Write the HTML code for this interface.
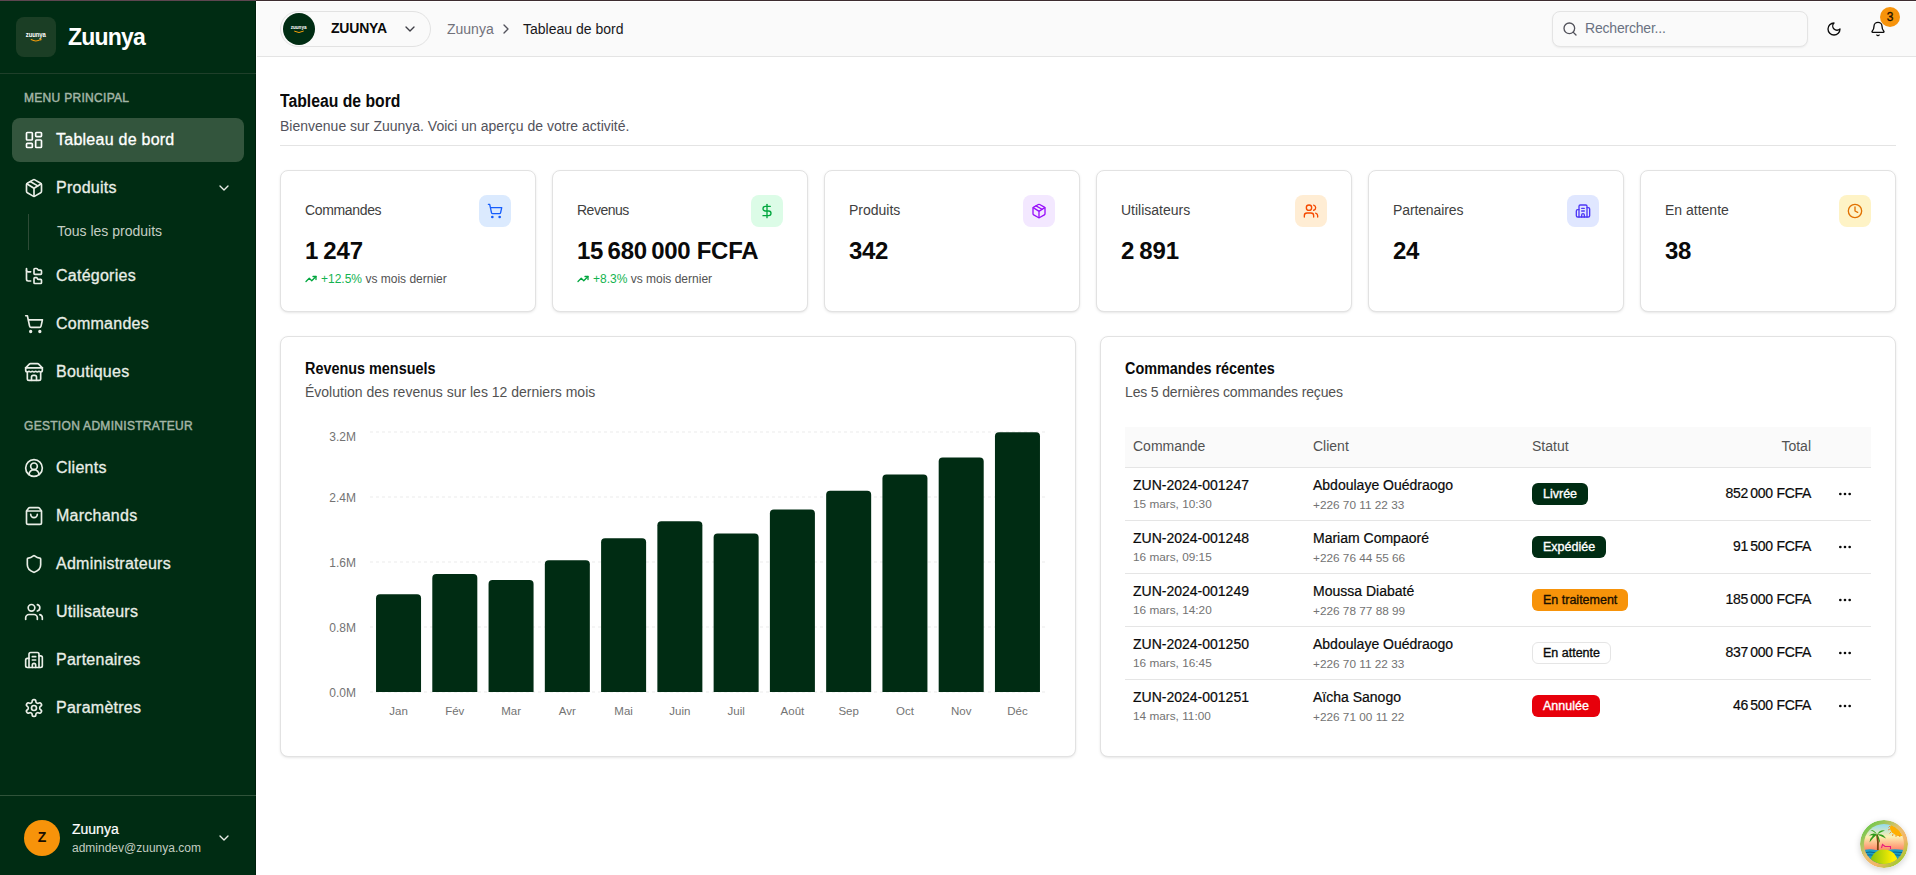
<!DOCTYPE html>
<html lang="fr">
<head>
<meta charset="utf-8">
<title>Zuunya - Tableau de bord</title>
<style>
*{box-sizing:border-box;margin:0;padding:0}
html,body{width:1916px;height:875px;overflow:hidden;background:#fff}
body{font-family:"Liberation Sans",sans-serif;color:#0a0a0a;position:relative}
.abs{position:absolute}
svg{display:block}
/* top artifact line */
#topline{left:0;top:0;width:1916px;height:1px;background:#3d2c30}
#topline:before{content:"";position:absolute;left:0;top:0;width:256px;height:1px;background:#5d4650}
/* sidebar */
#sb{left:0;top:1px;width:256px;height:874px;background:#002c13;border-right:1px solid #00200d;color:#e9eee7}
#sb .sep{position:absolute;left:0;width:256px;height:1px;background:#1f3f2a}
#logo{left:16px;top:16px;width:40px;height:40px;border-radius:8px;background:#1b3e25}
#brand{left:68px;top:23px;font-size:23px;font-weight:700;color:#fff;letter-spacing:-0.8px}
.grp{position:absolute;left:24px;font-size:12px;font-weight:400;-webkit-text-stroke:0.45px currentColor;color:#a3b5a6;letter-spacing:0.3px}
.nav{position:absolute;left:12px;width:232px;height:44px;border-radius:8px}
.nav.active{background:#33553d;color:#fff}
.nav svg{position:absolute;left:12px;top:12px}
.nav span{position:absolute;left:44px;top:13px;font-size:16px;white-space:nowrap;-webkit-text-stroke:0.3px currentColor;letter-spacing:0.25px}
.nav .chev{position:absolute;left:204px;top:14px;left:auto;right:12px}
.subline{position:absolute;left:28px;width:1px;height:36px;background:#2d4b36}
.sub{position:absolute;left:57px;font-size:14px;margin-top:1px;color:#c5cec3;white-space:nowrap}
#av{left:24px;top:819px;width:36px;height:36px;border-radius:50%;background:#f7930a;color:#1a0f00;font-size:14px;font-weight:700;text-align:center;line-height:35px}
#uname{left:72px;top:820px;font-size:14px;color:#fff;-webkit-text-stroke:0.2px currentColor}
#umail{left:72px;top:840px;font-size:12px;color:#c3cdc1}
/* main */
#hdr{left:257px;top:2px;width:1659px;height:55px;background:#fafafa;border-bottom:1px solid #e4e4e4}
#pill{left:23px;top:9px;width:151px;height:36px;border:1px solid #e2e2e2;border-radius:18px}
#pav{left:2px;top:1px;width:32px;height:32px;border-radius:50%;background:#002c13}
#pname{left:50px;top:8px;font-size:14px;font-weight:700;color:#0a0a0a;letter-spacing:-0.2px}
#bc1{left:190px;top:19px;font-size:14px;color:#71717a}
#bc2{left:266px;top:19px;font-size:14px;color:#18181b}
#search{left:1295px;top:9px;width:256px;height:36px;border:1px solid #e4e4e4;border-radius:8px;background:#fafafa;box-shadow:0 1px 2px rgba(0,0,0,.06)}
#sph{left:32px;top:8px;font-size:14px;color:#6a7282;letter-spacing:-0.2px}
#badge{left:1623px;top:5px;width:20px;height:20px;border-radius:50%;background:#f7930a;color:#1a0f00;font-size:12px;font-weight:400;-webkit-text-stroke:0.3px currentColor;text-align:center;line-height:20px}
#main{left:256px;top:57px;width:1660px;height:818px}
#ptitle{left:24px;top:33.5px;font-size:17.5px;font-weight:700;color:#0a0a0a;transform:scaleX(0.9);transform-origin:0 0}
#psub{left:24px;top:61px;font-size:14px;color:#52525b}
#phr{left:24px;top:88px;width:1616px;height:1px;background:#e4e4e4}
.card{position:absolute;background:#fff;border:1px solid #e2e2e2;border-radius:8px;box-shadow:0 1px 3px 0 rgba(0,0,0,.08),0 1px 2px -1px rgba(0,0,0,.08)}
.stat{width:256px;height:142px}
.slab{position:absolute;left:24px;top:31px;font-size:14px;color:#404040;white-space:nowrap}
.sico{position:absolute;left:198px;top:24px;width:32px;height:32px;border-radius:8px}
.sico svg{position:absolute;left:8px;top:8px}
.sval{position:absolute;left:24px;top:66px;font-size:24px;font-weight:700;color:#0a0a0a;white-space:nowrap;letter-spacing:-0.3px}
.strend{position:absolute;left:24px;top:101px;font-size:12px;color:#525252;white-space:nowrap;padding-left:16px}
.strend svg{position:absolute;left:0;top:1px}
.strend .g{color:#13b350}
.ctitle{position:absolute;left:24px;top:23px;font-size:16px;font-weight:700;color:#0a0a0a;white-space:nowrap;transform:scaleX(0.9);transform-origin:0 0}
.csub{position:absolute;left:24px;top:47px;font-size:14px;color:#525252;white-space:nowrap}
#tbl{position:absolute;left:24px;top:90px;width:746px;height:305px}
.th{position:absolute;left:0;top:0;width:746px;height:41px;background:#fafafa;border-bottom:1px solid #e5e5e5}
.th span{position:absolute;top:10.5px;font-size:14px;color:#525252}
.tr{position:absolute;left:0;width:746px;height:53px}
.tr.bb{border-bottom:1px solid #e5e5e5}
.oid{position:absolute;left:8px;top:9px;font-size:14px;color:#0a0a0a;-webkit-text-stroke:0.2px currentColor}
.odt{position:absolute;left:8px;top:29px;font-size:11.8px;color:#737373}
.cln{position:absolute;left:188px;top:9px;font-size:14px;color:#0a0a0a;-webkit-text-stroke:0.2px currentColor}
.clp{position:absolute;left:188px;top:29.5px;font-size:11.8px;color:#737373}
.bdg{position:absolute;left:407px;top:15px;height:22px;padding:0 11px;border-radius:6px;font-size:12.5px;font-weight:400;-webkit-text-stroke:0.35px currentColor;line-height:22px;white-space:nowrap}
.b-green{background:#002c13;color:#fff}
.b-orange{background:#f7930a;color:#1a0f00}
.b-outline{background:#fff;color:#0a0a0a;border:1px solid #e5e5e5;line-height:20px;padding:0 10px}
.b-red{background:#e7000b;color:#fff}
.tot{position:absolute;right:60px;top:16.5px;font-size:14px;letter-spacing:-0.3px;color:#0a0a0a;-webkit-text-stroke:0.2px currentColor;white-space:nowrap}
.dots{position:absolute;left:712px;top:18px}
#beach{left:1860px;top:820px;width:48px;height:48px;border-radius:50%;box-shadow:0 2px 6px rgba(0,0,0,.18)}
#beach svg{border-radius:50%}
</style>
</head>
<body>
<div id="topline" class="abs"></div>
<div id="sb" class="abs">
  <div id="logo" class="abs"><svg width="40" height="40" viewBox="0 0 40 40"><text x="19.8" y="20.1" text-anchor="middle" font-family="Liberation Sans" font-weight="700" font-size="6.3" fill="#fff" letter-spacing="-0.1" transform="translate(19.8 0) scale(0.95 1) translate(-19.8 0)">zuunya</text><path d="M15.2 22.6 Q20 25.4 24.8 22.4" stroke="#f59e0b" stroke-width="1.1" fill="none" stroke-linecap="round"/><path d="M23.6 21.9 L25.1 22.2 L24.7 23.6" stroke="#f59e0b" stroke-width="0.8" fill="none"/></svg></div>
  <div id="brand" class="abs">Zuunya</div>
  <div class="sep" style="top:72px"></div>
  <div class="grp" style="top:90px">MENU PRINCIPAL</div>
  <div class="nav active" style="top:117px"><svg width="20" height="20" viewBox="0 0 24 24" fill="none" stroke="currentColor" stroke-width="2" stroke-linecap="round" stroke-linejoin="round"><rect width="7" height="9" x="3" y="3" rx="1"/><rect width="7" height="5" x="14" y="3" rx="1"/><rect width="7" height="9" x="14" y="12" rx="1"/><rect width="7" height="5" x="3" y="16" rx="1"/></svg><span>Tableau de bord</span></div>
  <div class="nav" style="top:165px"><svg width="20" height="20" viewBox="0 0 24 24" fill="none" stroke="currentColor" stroke-width="2" stroke-linecap="round" stroke-linejoin="round"><path d="M11 21.73a2 2 0 0 0 2 0l7-4A2 2 0 0 0 21 16V8a2 2 0 0 0-1-1.73l-7-4a2 2 0 0 0-2 0l-7 4A2 2 0 0 0 3 8v8a2 2 0 0 0 1 1.73z"/><path d="M12 22V12"/><path d="m3.3 7 7.703 4.734a2 2 0 0 0 1.994 0L20.7 7"/><path d="m7.5 4.27 9 5.15"/></svg><span>Produits</span><svg class="chev" width="16" height="16" viewBox="0 0 24 24" fill="none" stroke="currentColor" stroke-width="2" stroke-linecap="round" stroke-linejoin="round"><path d="m6 9 6 6 6-6"/></svg></div>
  <div class="subline" style="top:213px"></div>
  <div class="sub" style="top:221px">Tous les produits</div>
  <div class="nav" style="top:253px"><svg width="20" height="20" viewBox="0 0 24 24" fill="none" stroke="currentColor" stroke-width="2" stroke-linecap="round" stroke-linejoin="round"><path d="M20 10a1 1 0 0 0 1-1V6a1 1 0 0 0-1-1h-2.5a1 1 0 0 1-.8-.4l-.9-1.2A1 1 0 0 0 15 3h-2a1 1 0 0 0-1 1v5a1 1 0 0 0 1 1Z"/><path d="M20 21a1 1 0 0 0 1-1v-3a1 1 0 0 0-1-1h-2.9a1 1 0 0 1-.88-.55l-.42-.85a1 1 0 0 0-.92-.6H13a1 1 0 0 0-1 1v5a1 1 0 0 0 1 1Z"/><path d="M3 5a2 2 0 0 0 2 2h3"/><path d="M3 3v13a2 2 0 0 0 2 2h3"/></svg><span>Catégories</span></div>
  <div class="nav" style="top:301px"><svg width="20" height="20" viewBox="0 0 24 24" fill="none" stroke="currentColor" stroke-width="2" stroke-linecap="round" stroke-linejoin="round"><circle cx="8" cy="21" r="1"/><circle cx="19" cy="21" r="1"/><path d="M2.05 2.05h2l2.66 12.42a2 2 0 0 0 2 1.58h9.78a2 2 0 0 0 1.95-1.57l1.65-7.43H5.12"/></svg><span>Commandes</span></div>
  <div class="nav" style="top:349px"><svg width="20" height="20" viewBox="0 0 24 24" fill="none" stroke="currentColor" stroke-width="2" stroke-linecap="round" stroke-linejoin="round"><path d="m2 7 4.41-4.41A2 2 0 0 1 7.83 2h8.34a2 2 0 0 1 1.42.59L22 7"/><path d="M4 12v8a2 2 0 0 0 2 2h12a2 2 0 0 0 2-2v-8"/><path d="M15 22v-4a2 2 0 0 0-2-2h-2a2 2 0 0 0-2 2v4"/><path d="M2 7h20"/><path d="M22 7v3a2 2 0 0 1-2 2a2.7 2.7 0 0 1-1.59-.63.7.7 0 0 0-.82 0A2.7 2.7 0 0 1 16 12a2.7 2.7 0 0 1-1.59-.63.7.7 0 0 0-.82 0A2.7 2.7 0 0 1 12 12a2.7 2.7 0 0 1-1.59-.63.7.7 0 0 0-.82 0A2.7 2.7 0 0 1 8 12a2.7 2.7 0 0 1-1.59-.63.7.7 0 0 0-.82 0A2.7 2.7 0 0 1 4 12a2 2 0 0 1-2-2V7"/></svg><span>Boutiques</span></div>
  <div class="grp" style="top:418px">GESTION ADMINISTRATEUR</div>
  <div class="nav" style="top:445px"><svg width="20" height="20" viewBox="0 0 24 24" fill="none" stroke="currentColor" stroke-width="2" stroke-linecap="round" stroke-linejoin="round"><path d="M18 20a6 6 0 0 0-12 0"/><circle cx="12" cy="10" r="4"/><circle cx="12" cy="12" r="10"/></svg><span>Clients</span></div>
  <div class="nav" style="top:493px"><svg width="20" height="20" viewBox="0 0 24 24" fill="none" stroke="currentColor" stroke-width="2" stroke-linecap="round" stroke-linejoin="round"><path d="M16 10a4 4 0 0 1-8 0"/><path d="M3.103 6.034h17.794"/><path d="M3.4 5.467a2 2 0 0 0-.4 1.2V20a2 2 0 0 0 2 2h14a2 2 0 0 0 2-2V6.667a2 2 0 0 0-.4-1.2l-2-2.667A2 2 0 0 0 17 2H7a2 2 0 0 0-1.6.8z"/></svg><span>Marchands</span></div>
  <div class="nav" style="top:541px"><svg width="20" height="20" viewBox="0 0 24 24" fill="none" stroke="currentColor" stroke-width="2" stroke-linecap="round" stroke-linejoin="round"><path d="M20 13c0 5-3.5 7.5-7.66 8.95a1 1 0 0 1-.67-.01C7.5 20.5 4 18 4 13V6a1 1 0 0 1 1-1c2 0 4.5-1.2 6.24-2.72a1.17 1.17 0 0 1 1.52 0C14.51 3.81 17 5 19 5a1 1 0 0 1 1 1z"/></svg><span>Administrateurs</span></div>
  <div class="nav" style="top:589px"><svg width="20" height="20" viewBox="0 0 24 24" fill="none" stroke="currentColor" stroke-width="2" stroke-linecap="round" stroke-linejoin="round"><path d="M16 21v-2a4 4 0 0 0-4-4H6a4 4 0 0 0-4 4v2"/><circle cx="9" cy="7" r="4"/><path d="M22 21v-2a4 4 0 0 0-3-3.87"/><path d="M16 3.13a4 4 0 0 1 0 7.75"/></svg><span>Utilisateurs</span></div>
  <div class="nav" style="top:637px"><svg width="20" height="20" viewBox="0 0 24 24" fill="none" stroke="currentColor" stroke-width="2" stroke-linecap="round" stroke-linejoin="round"><path d="M10 12h4"/><path d="M10 8h4"/><path d="M14 21v-3a2 2 0 0 0-4 0v3"/><path d="M6 10H4a2 2 0 0 0-2 2v7a2 2 0 0 0 2 2h16a2 2 0 0 0 2-2V9a2 2 0 0 0-2-2h-2"/><path d="M6 21V5a2 2 0 0 1 2-2h8a2 2 0 0 1 2 2v16"/></svg><span>Partenaires</span></div>
  <div class="nav" style="top:685px"><svg width="20" height="20" viewBox="0 0 24 24" fill="none" stroke="currentColor" stroke-width="2" stroke-linecap="round" stroke-linejoin="round"><path d="M12.22 2h-.44a2 2 0 0 0-2 2v.18a2 2 0 0 1-1 1.73l-.43.25a2 2 0 0 1-2 0l-.15-.08a2 2 0 0 0-2.73.73l-.22.38a2 2 0 0 0 .73 2.73l.15.1a2 2 0 0 1 1 1.72v.51a2 2 0 0 1-1 1.74l-.15.09a2 2 0 0 0-.73 2.73l.22.38a2 2 0 0 0 2.73.73l.15-.08a2 2 0 0 1 2 0l.43.25a2 2 0 0 1 1 1.73V20a2 2 0 0 0 2 2h.44a2 2 0 0 0 2-2v-.18a2 2 0 0 1 1-1.73l.43-.25a2 2 0 0 1 2 0l.15.08a2 2 0 0 0 2.73-.73l.22-.39a2 2 0 0 0-.73-2.73l-.15-.08a2 2 0 0 1-1-1.74v-.5a2 2 0 0 1 1-1.74l.15-.09a2 2 0 0 0 .73-2.73l-.22-.38a2 2 0 0 0-2.73-.73l-.15.08a2 2 0 0 1-2 0l-.43-.25a2 2 0 0 1-1-1.73V4a2 2 0 0 0-2-2z"/><circle cx="12" cy="12" r="3"/></svg><span>Paramètres</span></div>
  <div class="sep" style="top:794px;background:#30533a"></div>
  <div id="av" class="abs">Z</div>
  <div id="uname" class="abs">Zuunya</div>
  <div id="umail" class="abs">admindev@zuunya.com</div>
  <svg class="abs" style="left:216px;top:829px" width="16" height="16" viewBox="0 0 24 24" fill="none" stroke="#e9eee7" stroke-width="2" stroke-linecap="round" stroke-linejoin="round"><path d="m6 9 6 6 6-6"/></svg>
</div>
<div id="hdr" class="abs">
  <div id="pill" class="abs">
    <div id="pav" class="abs"><svg width="32" height="32" viewBox="0 0 32 32"><text x="15.6" y="16" text-anchor="middle" font-family="Liberation Sans" font-weight="700" font-size="4.6" fill="#fff">zuunya</text><path d="M11.6 18.3 Q16 21 20.4 18.2" stroke="#f59e0b" stroke-width="1" fill="none" stroke-linecap="round"/></svg></div>
    <div id="pname" class="abs">ZUUNYA</div>
    <svg class="abs" style="left:121px;top:9px" width="16" height="16" viewBox="0 0 24 24" fill="none" stroke="#3f3f46" stroke-width="2" stroke-linecap="round" stroke-linejoin="round"><path d="m6 9 6 6 6-6"/></svg>
  </div>
  <div id="bc1" class="abs">Zuunya</div>
  <svg class="abs" style="left:241px;top:19px" width="16" height="16" viewBox="0 0 24 24" fill="none" stroke="#52525b" stroke-width="2" stroke-linecap="round" stroke-linejoin="round"><path d="m9 18 6-6-6-6"/></svg>
  <div id="bc2" class="abs">Tableau de bord</div>
  <div id="search" class="abs">
    <svg class="abs" style="left:9px;top:9px" width="16" height="16" viewBox="0 0 24 24" fill="none" stroke="#52525b" stroke-width="2" stroke-linecap="round" stroke-linejoin="round"><circle cx="11" cy="11" r="8"/><path d="m21 21-4.3-4.3"/></svg>
    <div id="sph" class="abs">Rechercher...</div>
  </div>
  <svg class="abs" style="left:1569px;top:19px" width="16" height="16" viewBox="0 0 24 24" fill="none" stroke="#0a0a0a" stroke-width="2" stroke-linecap="round" stroke-linejoin="round"><path d="M12 3a6 6 0 0 0 9 9 9 9 0 1 1-9-9Z"/></svg>
  <svg class="abs" style="left:1613px;top:19px" width="16" height="16" viewBox="0 0 24 24" fill="none" stroke="#0a0a0a" stroke-width="2" stroke-linecap="round" stroke-linejoin="round"><path d="M10.268 21a2 2 0 0 0 3.464 0"/><path d="M3.262 15.326A1 1 0 0 0 4 17h16a1 1 0 0 0 .74-1.673C19.41 13.956 18 12.499 18 8A6 6 0 0 0 6 8c0 4.499-1.411 5.956-2.738 7.326"/></svg>
  <div id="badge" class="abs">3</div>
</div>
<div id="main" class="abs">
  <div id="ptitle" class="abs">Tableau de bord</div>
  <div id="psub" class="abs">Bienvenue sur Zuunya. Voici un aperçu de votre activité.</div>
  <div id="phr" class="abs"></div>
  <div class="card" style="left:24px;top:279px;width:796px;height:421px">
    <div class="ctitle">Revenus mensuels</div>
    <div class="csub">Évolution des revenus sur les 12 derniers mois</div>
    <svg class="abs" style="left:-1px;top:-1px" width="796" height="421" font-family="Liberation Sans"><line x1="90" x2="766" y1="96" y2="96" stroke="#ebebeb" stroke-dasharray="3 3"/><line x1="90" x2="766" y1="161" y2="161" stroke="#ebebeb" stroke-dasharray="3 3"/><line x1="90" x2="766" y1="226" y2="226" stroke="#ebebeb" stroke-dasharray="3 3"/><line x1="90" x2="766" y1="291" y2="291" stroke="#ebebeb" stroke-dasharray="3 3"/><line x1="90" x2="766" y1="356" y2="356" stroke="#ebebeb" stroke-dasharray="3 3"/><text x="76" y="104.3" text-anchor="end" font-size="12" fill="#737373" dy="0.3">3.2M</text><text x="76" y="165.3" text-anchor="end" font-size="12" fill="#737373" dy="0.3">2.4M</text><text x="76" y="230.3" text-anchor="end" font-size="12" fill="#737373" dy="0.3">1.6M</text><text x="76" y="295.3" text-anchor="end" font-size="12" fill="#737373" dy="0.3">0.8M</text><text x="76" y="360.3" text-anchor="end" font-size="12" fill="#737373" dy="0.3">0.0M</text><path d="M96.03 356 V262.30 Q96.03 258.30 100.03 258.30 H137.04 Q141.04 258.30 141.04 262.30 V356 Z" fill="#002c13"/><text x="118.53" y="379" text-anchor="middle" font-size="11.5" fill="#737373" dy="-0.5">Jan</text><path d="M152.29 356 V242.10 Q152.29 238.10 156.29 238.10 H193.31 Q197.31 238.10 197.31 242.10 V356 Z" fill="#002c13"/><text x="174.80" y="379" text-anchor="middle" font-size="11.5" fill="#737373" dy="-0.5">Fév</text><path d="M208.56 356 V248.00 Q208.56 244.00 212.56 244.00 H249.57 Q253.57 244.00 253.57 248.00 V356 Z" fill="#002c13"/><text x="231.07" y="379" text-anchor="middle" font-size="11.5" fill="#737373" dy="-0.5">Mar</text><path d="M264.83 356 V228.30 Q264.83 224.30 268.83 224.30 H305.84 Q309.84 224.30 309.84 228.30 V356 Z" fill="#002c13"/><text x="287.33" y="379" text-anchor="middle" font-size="11.5" fill="#737373" dy="-0.5">Avr</text><path d="M321.09 356 V206.30 Q321.09 202.30 325.09 202.30 H362.11 Q366.11 202.30 366.11 206.30 V356 Z" fill="#002c13"/><text x="343.60" y="379" text-anchor="middle" font-size="11.5" fill="#737373" dy="-0.5">Mai</text><path d="M377.36 356 V189.20 Q377.36 185.20 381.36 185.20 H418.37 Q422.37 185.20 422.37 189.20 V356 Z" fill="#002c13"/><text x="399.87" y="379" text-anchor="middle" font-size="11.5" fill="#737373" dy="-0.5">Juin</text><path d="M433.63 356 V201.60 Q433.63 197.60 437.63 197.60 H474.64 Q478.64 197.60 478.64 201.60 V356 Z" fill="#002c13"/><text x="456.13" y="379" text-anchor="middle" font-size="11.5" fill="#737373" dy="-0.5">Juil</text><path d="M489.89 356 V177.50 Q489.89 173.50 493.89 173.50 H530.91 Q534.91 173.50 534.91 177.50 V356 Z" fill="#002c13"/><text x="512.40" y="379" text-anchor="middle" font-size="11.5" fill="#737373" dy="-0.5">Août</text><path d="M546.16 356 V158.70 Q546.16 154.70 550.16 154.70 H587.17 Q591.17 154.70 591.17 158.70 V356 Z" fill="#002c13"/><text x="568.67" y="379" text-anchor="middle" font-size="11.5" fill="#737373" dy="-0.5">Sep</text><path d="M602.43 356 V142.40 Q602.43 138.40 606.43 138.40 H643.44 Q647.44 138.40 647.44 142.40 V356 Z" fill="#002c13"/><text x="624.93" y="379" text-anchor="middle" font-size="11.5" fill="#737373" dy="-0.5">Oct</text><path d="M658.69 356 V125.50 Q658.69 121.50 662.69 121.50 H699.71 Q703.71 121.50 703.71 125.50 V356 Z" fill="#002c13"/><text x="681.20" y="379" text-anchor="middle" font-size="11.5" fill="#737373" dy="-0.5">Nov</text><path d="M714.96 356 V100.20 Q714.96 96.20 718.96 96.20 H755.97 Q759.97 96.20 759.97 100.20 V356 Z" fill="#002c13"/><text x="737.47" y="379" text-anchor="middle" font-size="11.5" fill="#737373" dy="-0.5">Déc</text></svg>
  </div>
  <div class="card" style="left:844px;top:279px;width:796px;height:421px">
    <div class="ctitle">Commandes récentes</div>
    <div class="csub" style="letter-spacing:-0.15px">Les 5 dernières commandes reçues</div>
    <div id="tbl">
      <div class="th"><span style="left:8px">Commande</span><span style="left:188px">Client</span><span style="left:407px">Statut</span><span style="right:60px">Total</span></div>
      <div class="tr bb" style="top:41px">
        <div class="oid">ZUN-2024-001247</div><div class="odt">15 mars, 10:30</div>
        <div class="cln">Abdoulaye Ouédraogo</div><div class="clp">+226 70 11 22 33</div>
        <div class="bdg b-green">Livrée</div>
        <div class="tot">852 000 FCFA</div>
        <svg class="dots" width="16" height="16" viewBox="0 0 24 24" fill="none" stroke="#0a0a0a" stroke-width="2" stroke-linecap="round" stroke-linejoin="round"><circle cx="12" cy="12" r="1"/><circle cx="19" cy="12" r="1"/><circle cx="5" cy="12" r="1"/></svg>
      </div>
      <div class="tr bb" style="top:94px">
        <div class="oid">ZUN-2024-001248</div><div class="odt">16 mars, 09:15</div>
        <div class="cln">Mariam Compaoré</div><div class="clp">+226 76 44 55 66</div>
        <div class="bdg b-green">Expédiée</div>
        <div class="tot">91 500 FCFA</div>
        <svg class="dots" width="16" height="16" viewBox="0 0 24 24" fill="none" stroke="#0a0a0a" stroke-width="2" stroke-linecap="round" stroke-linejoin="round"><circle cx="12" cy="12" r="1"/><circle cx="19" cy="12" r="1"/><circle cx="5" cy="12" r="1"/></svg>
      </div>
      <div class="tr bb" style="top:147px">
        <div class="oid">ZUN-2024-001249</div><div class="odt">16 mars, 14:20</div>
        <div class="cln">Moussa Diabaté</div><div class="clp">+226 78 77 88 99</div>
        <div class="bdg b-orange">En traitement</div>
        <div class="tot">185 000 FCFA</div>
        <svg class="dots" width="16" height="16" viewBox="0 0 24 24" fill="none" stroke="#0a0a0a" stroke-width="2" stroke-linecap="round" stroke-linejoin="round"><circle cx="12" cy="12" r="1"/><circle cx="19" cy="12" r="1"/><circle cx="5" cy="12" r="1"/></svg>
      </div>
      <div class="tr bb" style="top:200px">
        <div class="oid">ZUN-2024-001250</div><div class="odt">16 mars, 16:45</div>
        <div class="cln">Abdoulaye Ouédraogo</div><div class="clp">+226 70 11 22 33</div>
        <div class="bdg b-outline">En attente</div>
        <div class="tot">837 000 FCFA</div>
        <svg class="dots" width="16" height="16" viewBox="0 0 24 24" fill="none" stroke="#0a0a0a" stroke-width="2" stroke-linecap="round" stroke-linejoin="round"><circle cx="12" cy="12" r="1"/><circle cx="19" cy="12" r="1"/><circle cx="5" cy="12" r="1"/></svg>
      </div>
      <div class="tr" style="top:253px">
        <div class="oid">ZUN-2024-001251</div><div class="odt">14 mars, 11:00</div>
        <div class="cln">Aïcha Sanogo</div><div class="clp">+226 71 00 11 22</div>
        <div class="bdg b-red">Annulée</div>
        <div class="tot">46 500 FCFA</div>
        <svg class="dots" width="16" height="16" viewBox="0 0 24 24" fill="none" stroke="#0a0a0a" stroke-width="2" stroke-linecap="round" stroke-linejoin="round"><circle cx="12" cy="12" r="1"/><circle cx="19" cy="12" r="1"/><circle cx="5" cy="12" r="1"/></svg>
      </div>
    </div>
  </div>
  <div class="card stat" style="left:24px;top:113px">
    <div class="slab" style="letter-spacing:-0.35px">Commandes</div>
    <div class="sico" style="background:#dbeafe"><svg width="16" height="16" viewBox="0 0 24 24" fill="none" stroke="#155dfc" stroke-width="2" stroke-linecap="round" stroke-linejoin="round"><circle cx="8" cy="21" r="1"/><circle cx="19" cy="21" r="1"/><path d="M2.05 2.05h2l2.66 12.42a2 2 0 0 0 2 1.58h9.78a2 2 0 0 0 1.95-1.57l1.65-7.43H5.12"/></svg></div>
    <div class="sval">1 247</div>
    <div class="strend"><svg width="12" height="12" viewBox="0 0 24 24" fill="none" stroke="#00a63e" stroke-width="2.6" stroke-linecap="round" stroke-linejoin="round"><polyline points="22 7 13.5 15.5 8.5 10.5 2 17"/><polyline points="16 7 22 7 22 13"/></svg><span class="g">+12.5%</span> vs mois dernier</div>
  </div>
  <div class="card stat" style="left:296px;top:113px">
    <div class="slab" style="letter-spacing:-0.5px">Revenus</div>
    <div class="sico" style="background:#dcfce7"><svg width="16" height="16" viewBox="0 0 24 24" fill="none" stroke="#00a63e" stroke-width="2" stroke-linecap="round" stroke-linejoin="round"><line x1="12" x2="12" y1="2" y2="22"/><path d="M17 5H9.5a3.5 3.5 0 0 0 0 7h5a3.5 3.5 0 0 1 0 7H6"/></svg></div>
    <div class="sval">15 680 000 FCFA</div>
    <div class="strend"><svg width="12" height="12" viewBox="0 0 24 24" fill="none" stroke="#00a63e" stroke-width="2.6" stroke-linecap="round" stroke-linejoin="round"><polyline points="22 7 13.5 15.5 8.5 10.5 2 17"/><polyline points="16 7 22 7 22 13"/></svg><span class="g">+8.3%</span> vs mois dernier</div>
  </div>
  <div class="card stat" style="left:568px;top:113px">
    <div class="slab">Produits</div>
    <div class="sico" style="background:#f3e8ff"><svg width="16" height="16" viewBox="0 0 24 24" fill="none" stroke="#9810fa" stroke-width="2" stroke-linecap="round" stroke-linejoin="round"><path d="M11 21.73a2 2 0 0 0 2 0l7-4A2 2 0 0 0 21 16V8a2 2 0 0 0-1-1.73l-7-4a2 2 0 0 0-2 0l-7 4A2 2 0 0 0 3 8v8a2 2 0 0 0 1 1.73z"/><path d="M12 22V12"/><path d="m3.3 7 7.703 4.734a2 2 0 0 0 1.994 0L20.7 7"/><path d="m7.5 4.27 9 5.15"/></svg></div>
    <div class="sval">342</div>
  </div>
  <div class="card stat" style="left:840px;top:113px">
    <div class="slab">Utilisateurs</div>
    <div class="sico" style="background:#ffedd4"><svg width="16" height="16" viewBox="0 0 24 24" fill="none" stroke="#f54900" stroke-width="2" stroke-linecap="round" stroke-linejoin="round"><path d="M16 21v-2a4 4 0 0 0-4-4H6a4 4 0 0 0-4 4v2"/><circle cx="9" cy="7" r="4"/><path d="M22 21v-2a4 4 0 0 0-3-3.87"/><path d="M16 3.13a4 4 0 0 1 0 7.75"/></svg></div>
    <div class="sval">2 891</div>
  </div>
  <div class="card stat" style="left:1112px;top:113px">
    <div class="slab" style="letter-spacing:-0.12px">Partenaires</div>
    <div class="sico" style="background:#e0e7ff"><svg width="16" height="16" viewBox="0 0 24 24" fill="none" stroke="#4f39f6" stroke-width="2" stroke-linecap="round" stroke-linejoin="round"><path d="M10 12h4"/><path d="M10 8h4"/><path d="M14 21v-3a2 2 0 0 0-4 0v3"/><path d="M6 10H4a2 2 0 0 0-2 2v7a2 2 0 0 0 2 2h16a2 2 0 0 0 2-2V9a2 2 0 0 0-2-2h-2"/><path d="M6 21V5a2 2 0 0 1 2-2h8a2 2 0 0 1 2 2v16"/></svg></div>
    <div class="sval">24</div>
  </div>
  <div class="card stat" style="left:1384px;top:113px">
    <div class="slab">En attente</div>
    <div class="sico" style="background:#fef3c6"><svg width="16" height="16" viewBox="0 0 24 24" fill="none" stroke="#e17100" stroke-width="2" stroke-linecap="round" stroke-linejoin="round"><circle cx="12" cy="12" r="10"/><polyline points="12 6 12 12 16 14"/></svg></div>
    <div class="sval">38</div>
  </div>
</div>
<div id="beach" class="abs"><svg width="48" height="48" viewBox="0 0 48 48">
<defs>
<linearGradient id="ring" x1="0.15" y1="0.1" x2="0.85" y2="0.9"><stop offset="0" stop-color="#6cc84a"/><stop offset="0.45" stop-color="#e8c070"/><stop offset="0.7" stop-color="#f4b46a"/><stop offset="1" stop-color="#9ccc2a"/></linearGradient>
<linearGradient id="sky" x1="0" y1="0" x2="0" y2="1"><stop offset="0.05" stop-color="#86d8f5"/><stop offset="0.35" stop-color="#fcefb0"/><stop offset="0.62" stop-color="#ff8a6a"/></linearGradient>
<linearGradient id="isl" x1="0" y1="0" x2="1" y2="0"><stop offset="0" stop-color="#7cbf10"/><stop offset="0.8" stop-color="#ffef00"/></linearGradient>
<clipPath id="inner"><circle cx="24" cy="24" r="20"/></clipPath>
</defs>
<circle cx="24" cy="24" r="24" fill="url(#ring)"/>
<g clip-path="url(#inner)">
<rect x="0" y="0" width="48" height="48" fill="url(#sky)"/>
<path d="M31 5 A9 9 0 0 0 44 15 Z" fill="#ffb000"/>
<circle cx="36" cy="8" r="6" fill="#ffae00"/>
<path d="M30 6 L28.5 7.5 M30 9 L28 10 M31 12 L29.5 13.5 M33 14 L32.5 16 M36 15 L36 17 M39 15 L40 17" stroke="#f08a20" stroke-width="0.9"/>
<path d="M4 30 Q10 28.5 16 30 T28 30 T44 30 V48 H4Z" fill="#1a9fc7"/>
<path d="M4 32.8 Q10 31.3 16 32.8 T28 32.8 T44 32.8" stroke="#0a5f86" stroke-width="0.9" fill="none"/>
<path d="M4 35.6 Q10 34.1 16 35.6 T28 35.6 T44 35.6" stroke="#0a5f86" stroke-width="0.9" fill="none"/>
<path d="M9 46 Q11 30 24 29.5 Q37 30 39 46Z" fill="url(#isl)"/>
<path d="M17.8 30 Q18.5 22 17 14.5" stroke="#7a4410" stroke-width="1.8" fill="none"/>
<path d="M17 14.5 Q12 12 8.5 16.5 Q11 14.8 13 15.5 Q10 18 9.5 22.5 Q13 17.5 17 14.5Z" fill="#2f9a1a"/>
<path d="M17 14.5 Q14.5 9.5 10.5 10 Q14 11.5 17 14.5Z" fill="#3aaa22"/>
<path d="M17 14.5 Q20 9 25 10.5 Q21 12 17 14.5Z" fill="#3aaa22"/>
<path d="M17 14.5 Q23 13 26 18.5 Q21 16 17 14.5Z" fill="#2f9a1a"/>
<path d="M17 14.5 Q20 18 20 23 Q17.5 19 17 14.5Z" fill="#2f9a1a"/>
<path d="M21.5 28 L22.5 24.5 L25 26.5 L30.5 26.5 L30.5 29" stroke="#e81f7a" stroke-width="1.1" fill="none"/>
</g>
</svg></div>
</body>
</html>
